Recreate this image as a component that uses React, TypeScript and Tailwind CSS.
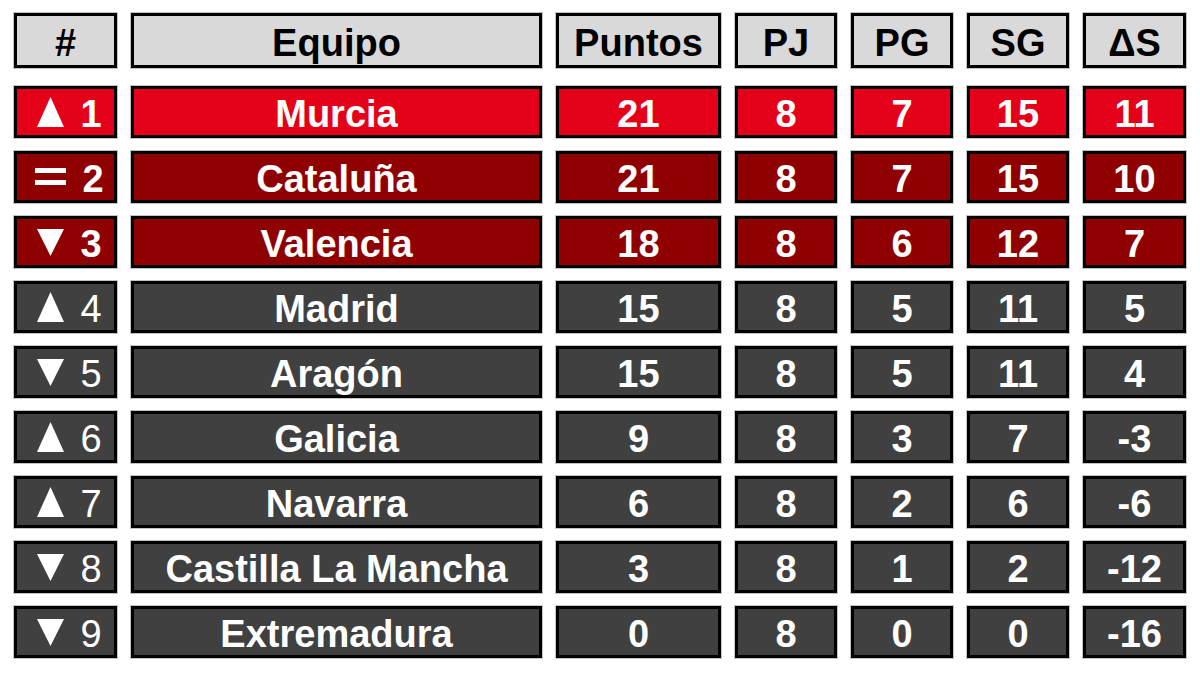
const cols = "grid grid-cols-[103px_411px_165px_102px_102px_102px_103px] gap-x-[14px]";

type Trend = "up" | "down" | "same";

interface Row {
  pos: number;
  trend: Trend;
  team: string;
  pts: number;
  pj: number;
  pg: number;
  sg: number;
  ds: number;
}

const rows: Row[] = [
  { pos: 1, trend: "up", team: "Murcia", pts: 21, pj: 8, pg: 7, sg: 15, ds: 11 },
  { pos: 2, trend: "same", team: "Cataluña", pts: 21, pj: 8, pg: 7, sg: 15, ds: 10 },
  { pos: 3, trend: "down", team: "Valencia", pts: 18, pj: 8, pg: 6, sg: 12, ds: 7 },
  { pos: 4, trend: "up", team: "Madrid", pts: 15, pj: 8, pg: 5, sg: 11, ds: 5 },
  { pos: 5, trend: "down", team: "Aragón", pts: 15, pj: 8, pg: 5, sg: 11, ds: 4 },
  { pos: 6, trend: "up", team: "Galicia", pts: 9, pj: 8, pg: 3, sg: 7, ds: -3 },
  { pos: 7, trend: "up", team: "Navarra", pts: 6, pj: 8, pg: 2, sg: 6, ds: -6 },
  { pos: 8, trend: "down", team: "Castilla La Mancha", pts: 3, pj: 8, pg: 1, sg: 2, ds: -12 },
  { pos: 9, trend: "down", team: "Extremadura", pts: 0, pj: 8, pg: 0, sg: 0, ds: -16 },
];

// color por posición
function rowBg(pos: number) {
  if (pos === 1) return "bg-[#e5001a]";
  if (pos <= 3) return "bg-[#8f0000]";
  return "bg-[#404040]";
}

function TrendIcon({ trend }: { trend: Trend }) {
  if (trend === "up")
    return (
      <svg width="27" height="30" viewBox="0 0 27 30">
        <polygon points="13.5,0 27,30 0,30" fill="white" />
      </svg>
    );
  if (trend === "down")
    return (
      <svg width="27" height="27" viewBox="0 0 27 27">
        <polygon points="0,0 27,0 13.5,27" fill="white" />
      </svg>
    );
  return (
    <svg width="31" height="18" viewBox="0 0 31 18">
      <rect x="0" y="0" width="31" height="5" fill="white" />
      <rect x="0" y="12" width="31" height="5" fill="white" />
    </svg>
  );
}

function Cell({ className = "", children }: { className?: string; children: React.ReactNode }) {
  return (
    <div
      className={`flex items-center justify-center border-[3px] border-black shadow-[0_0_0_1px_#c4c4c4] leading-none pt-[4px] ${className}`}
    >
      {children}
    </div>
  );
}

export default function App() {
  return (
    <div
      className="w-[1200px] h-[675px] bg-white pt-[13px] pl-[14px] text-[38px]"
      style={{ fontFamily: '"Liberation Sans", Arial, sans-serif' }}
    >
      {/* cabecera */}
      <div className={`${cols} h-[55px] font-bold text-black text-[38px]`}>
        {["#", "Equipo", "Puntos", "PJ", "PG", "SG", "ΔS"].map((h) => (
          <Cell key={h} className="bg-[#d9d9d9]">
            {h}
          </Cell>
        ))}
      </div>

      <div className="mt-[18px] flex flex-col gap-y-[13px]">
        {rows.map((r) => {
          const bg = rowBg(r.pos);
          return (
            <div key={r.pos} className={`${cols} h-[52px] text-white font-bold`}>
              <Cell className={`${bg} gap-[16px] pl-[8px]`}>
                <span className="-mt-[4px] flex">
                  <TrendIcon trend={r.trend} />
                </span>
                <span className={r.pos <= 3 ? "font-bold" : "font-normal"}>{r.pos}</span>
              </Cell>
              <Cell className={bg}>{r.team}</Cell>
              <Cell className={bg}>{r.pts}</Cell>
              <Cell className={bg}>{r.pj}</Cell>
              <Cell className={bg}>{r.pg}</Cell>
              <Cell className={bg}>{r.sg}</Cell>
              <Cell className={bg}>{r.ds}</Cell>
            </div>
          );
        })}
      </div>
    </div>
  );
}
